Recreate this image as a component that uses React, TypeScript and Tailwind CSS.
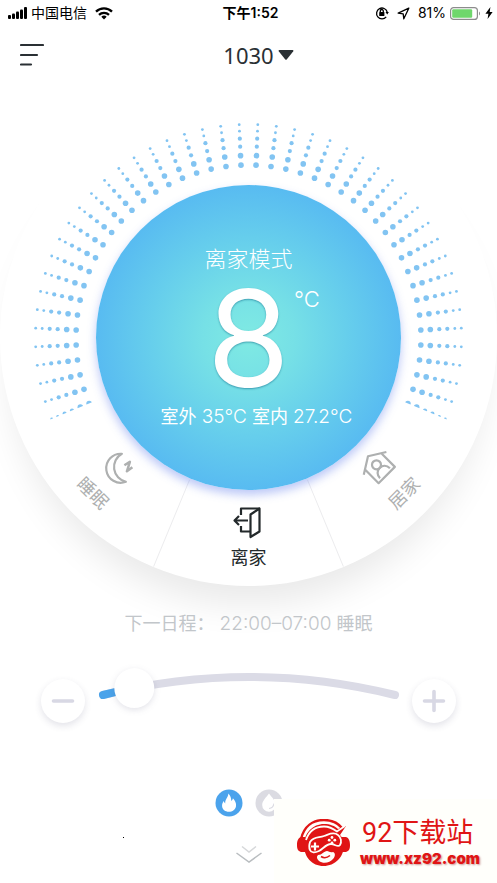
import { useState } from "react";
import type { ReactNode } from "react";

const CENTER = 248.5;
const DOTS = [
  { r: 213, size: 1.4 },
  { r: 206.5, size: 1.4 },
  { r: 199, size: 2.1 },
  { r: 191, size: 2.1 },
  { r: 182, size: 2.8 },
  { r: 172.5, size: 2.8 },
];
const RAYS = Array.from({ length: 46 }, (_, i) => -112.5 + i * 5);

function polar(r: number, deg: number) {
  const a = (deg * Math.PI) / 180;
  return { x: CENTER + r * Math.sin(a), y: CENTER - r * Math.cos(a) };
}

function StatusBar() {
  return (
    <div className="grid h-6 grid-cols-3 items-center pt-0.5 pr-1 pl-2 text-sm text-black">
      <div className="flex items-center gap-1">
        <svg width="19" height="12" viewBox="0 0 19 12" aria-hidden="true">
          <rect x="0" y="8" width="3" height="4" rx="1" />
          <rect x="4" y="6.5" width="3" height="5.5" rx="1" />
          <rect x="8" y="4.5" width="3" height="7.5" rx="1" />
          <rect x="12" y="2.5" width="3" height="9.5" rx="1" />
          <rect x="16" y="0" width="3" height="12" rx="1" />
        </svg>
        <span>中国电信</span>
        <svg className="ml-1" width="18" height="13" viewBox="0 0 18 13" fill="none" stroke="#000" strokeWidth="2.3" aria-hidden="true">
          <path d="M1 4.6a11.5 11.5 0 0 1 16 0" />
          <path d="M4 7.8a7.2 7.2 0 0 1 10 0" />
          <path d="M6.3 9.8a4 4 0 0 1 5.4 0L9 12.6z" fill="#000" stroke="none" />
        </svg>
      </div>
      <div className="text-center font-semibold">下午1:52</div>
      <div className="flex items-center justify-end gap-1">
        <svg className="mr-1" width="14" height="14" viewBox="0 0 14 14" fill="none" stroke="#000" strokeWidth="1.3" aria-hidden="true">
          <path d="M11.2 10.8A5.4 5.4 0 1 1 12.2 6" />
          <path d="M10.5 6h3.4l-1.7 2.4z" fill="#000" stroke="none" />
          <rect x="4.2" y="6" width="5.2" height="4" rx=".6" fill="#000" stroke="none" />
          <path d="M5.3 6V5a1.5 1.5 0 0 1 3 0v1" />
        </svg>
        <svg className="mr-1" width="13" height="13" viewBox="0 0 13 13" fill="none" stroke="#000" strokeWidth="1.3" strokeLinejoin="round" aria-hidden="true">
          <path d="M11.8 1.2 1.2 6.2l5 .6.6 5z" />
        </svg>
        <span>81%</span>
        <svg width="31" height="13" viewBox="0 0 31 13" aria-hidden="true">
          <rect x=".6" y=".6" width="26.8" height="11.8" rx="3" fill="none" stroke="#8c8c8c" strokeWidth="1.2" />
          <rect x="2.2" y="2.2" width="20" height="8.6" rx="1.2" fill="#6fd76c" />
          <path d="M29 4.5v4c1.3-.5 1.3-3.5 0-4z" fill="#8c8c8c" />
        </svg>
        <svg width="8" height="12" viewBox="0 0 8 12" aria-hidden="true">
          <path d="M5.4 0 .4 6.8h3L2.6 12l5-7H4.7z" />
        </svg>
      </div>
    </div>
  );
}

function Header() {
  return (
    <header className="grid h-16 grid-cols-3 items-center px-5 pb-0.5 text-[#2a3034]">
      <button type="button" aria-label="菜单" className="justify-self-start">
        <svg width="24" height="24" viewBox="0 0 24 24" stroke="currentColor" strokeWidth="2.2" strokeLinecap="round">
          <path d="M1 2h22M1 12h16M1 21.500h10" />
        </svg>
      </button>
      <button type="button" className="flex items-center gap-1 justify-self-center pl-5 font-['Noto_Sans',sans-serif] text-[22px] font-normal">
        1030
        <svg width="16" height="10" viewBox="0 0 15 10" fill="currentColor" aria-hidden="true">
          <path d="M.8 0h13.400a.8.8 0 0 1 .6 1.300L8.400 9.200a1.200 1.200 0 0 1-1.800 0L.2 1.300A.8.8 0 0 1 .8 0z" />
        </svg>
      </button>
    </header>
  );
}

function DialFace() {
  const a = polar(240, -112.5);
  const b = polar(240, 112.5);
  return (
    <svg viewBox="0 0 497 497" className="col-start-1 row-start-1 w-full" aria-hidden="true">
      <clipPath id="sweep">
        <path d={`M${CENTER} ${CENTER}L${a.x} ${a.y}L0 0H497L${b.x} ${b.y}z`} />
      </clipPath>
      <g fill="#82c4f2" clipPath="url(#sweep)">
        {RAYS.map((deg) =>
          DOTS.map((dot) => {
            const p = polar(dot.r, deg);
            return <circle key={`${deg}-${dot.r}`} cx={p.x} cy={p.y} r={dot.size} />;
          }),
        )}
      </g>
      {[157.5, 202.5].map((deg) => {
        const p = polar(154, deg);
        const q = polar(248, deg);
        return <line key={deg} x1={p.x} y1={p.y} x2={q.x} y2={q.y} stroke="#ececee" />;
      })}
    </svg>
  );
}

function Mode({ label, turn, tone, children }: { label: string; turn: string; tone: string; children: ReactNode }) {
  return (
    <div className={`pointer-events-none z-10 col-start-1 row-start-1 flex items-end justify-center pb-3.5 ${turn}`}>
      <button type="button" className={`pointer-events-auto flex flex-col items-center gap-1 text-lg font-normal ${tone}`}>
        <svg width="36" height="36" viewBox="-18 -18 36 36" fill="none" stroke="currentColor" strokeWidth="2.2" strokeLinejoin="round" aria-hidden="true">
          {children}
        </svg>
        {label}
      </button>
    </div>
  );
}

function Dial() {
  return (
    <main className="mx-auto mt-px grid aspect-square w-full max-w-lg rounded-full bg-white shadow-[0_30px_36px_-12px_rgba(0,0,0,0.09)]">
      <DialFace />
      <section className="z-10 col-start-1 row-start-1 flex aspect-square w-[305px] flex-col items-center place-self-center rounded-full bg-[radial-gradient(circle_closest-side,#7feae3_0%,#76e0e6_30%,#66ceec_65%,#58bbf1_100%)] pt-[58px] text-white shadow-[0_5px_10px_rgba(95,125,235,0.42)]">
        <h1 className="text-[22px] leading-8 font-light">离家模式</h1>
        <div className="grid grid-cols-[1fr_auto_1fr] items-start">
          <span className="col-start-2 text-[134px] leading-[126px] font-normal [text-shadow:0_1px_2px_rgba(20,110,140,0.6)]">8</span>
          <span className="pt-3 pl-1 text-[22px] leading-6 font-light">°C</span>
        </div>
        <p className="pl-4 text-lg leading-8">
          室外 <span className="text-[19px] font-light">35°C</span> 室内 <span className="text-[19px] font-light">27.2°C</span>
        </p>
      </section>
      <Mode label="睡眠" turn="rotate-45" tone="text-[#aeb0b0]">
        <g transform="rotate(-45)">
          <path d="M3.500-14.500A14.500 14.500 0 1 0 7.500 13.500 A15.100 15.100 0 0 1 3.500-14.500z" />
          <path d="M6-3 11.500-6.500 8.500 3 14-1" strokeWidth="2.500" />
        </g>
      </Mode>
      <Mode label="离家" turn="rotate-0" tone="text-[#23292b]">
        <path d="M-8-7v-6.500H10.500M-8 4v5.500H1" />
        <path d="M10.500-13.500V9.500L1.500 15V-7.500z" />
        <path d="M-1-1.500H-14M-10-6-14.500-1.500-10 3" />
      </Mode>
      <Mode label="居家" turn="-rotate-45" tone="text-[#aeb0b0]">
        <path d="M-16-6 0-16 16-6M-11.500-8V10.500H11.500V-8" />
        <circle cx="0" cy="-4" r="4.500" />
        <path d="M-7 8c0-4.500 3-7.500 7-7.500S7 3.500 7 8" />
      </Mode>
    </main>
  );
}

function StepButton({ label, path, onClick }: { label: string; path: string; onClick: () => void }) {
  return (
    <button
      type="button"
      aria-label={label}
      onClick={onClick}
      className="mt-4 flex size-11 shrink-0 items-center justify-center rounded-full bg-white shadow-[0_3px_7px_rgba(60,60,100,0.14)]"
    >
      <svg width="24" height="24" viewBox="0 0 24 24" stroke="#d8d8e4" strokeWidth="3.600" strokeLinecap="round">
        <path d={path} />
      </svg>
    </button>
  );
}

function TemperatureSlider() {
  const [value, setValue] = useState(8);
  const t = (value - 5) / 28;
  const x = 6 + 292 * t;
  const y = 32 - 72 * t * (1 - t);
  return (
    <div className="mx-auto flex w-full max-w-lg justify-between px-[41px]">
      <StepButton label="降低温度" path="M2.500 12h19" onClick={() => setValue(Math.max(5, value - 1))} />
      <div className="grid w-[304px] shrink-0">
        <svg viewBox="0 0 304 60" className="col-start-1 row-start-1 w-full overflow-visible" fill="none" strokeWidth="8" strokeLinecap="round" aria-hidden="true">
          <path d="M6 32Q152-4 298 32" stroke="#dbdbe6" />
          <path d="M6 32Q152-4 298 32" stroke="#4aa3ea" pathLength={100} strokeDasharray={`${t * 100 - 3} 200`} />
          <circle cx={x} cy={y} r="20" fill="#fff" className="drop-shadow-[0_2px_3px_rgba(60,60,100,0.14)]" />
        </svg>
        <input
          type="range"
          aria-label="目标温度"
          min={5}
          max={33}
          value={value}
          onChange={(e) => setValue(Number(e.target.value))}
          className="z-10 col-start-1 row-start-1 w-full cursor-pointer opacity-0"
        />
      </div>
      <StepButton label="升高温度" path="M2.500 12h19M12 2.500v19" onClick={() => setValue(Math.min(33, value + 1))} />
    </div>
  );
}

function Features() {
  return (
    <div className="flex flex-col items-center">
      <div className="flex gap-3">
        <button type="button" aria-label="加热" className="size-7 rounded-full">
          <svg viewBox="0 0 28 28">
            <circle cx="14" cy="14" r="13.500" fill="#4ba3ec" />
            <path d="M13.300 4.500c1.800 2 3.200 4.300 2.900 7.300 1-.5 1.600-1.400 1.700-2.600 2.100 2.400 3.600 4.900 3.100 8-.6 3.400-3.400 5.600-7.200 5.600-3.600 0-6.400-2.200-6.700-5.500-.2-2 .5-3.700 1.600-5.200.2 1 .7 1.800 1.500 2.300-.1-1.600.2-3.100 1.200-4.600 1-1.600 1.900-3.200 1.900-5.300z" fill="#fff" />
          </svg>
        </button>
        <button type="button" aria-label="加湿" className="size-7 rounded-full">
          <svg viewBox="0 0 28 28">
            <circle cx="14" cy="14" r="13.500" fill="#dbdbe2" />
            <path d="M14 4.500c3 4 6.800 7.400 6.800 11.600A6.700 6.700 0 0 1 14 22.800a6.700 6.700 0 0 1-6.800-6.700C7.200 11.900 11 8.500 14 4.500z" fill="#fff" />
            <path d="M14 19.500c3-.3 4.500-2 5-5" fill="none" stroke="#dbdbe2" strokeWidth="1.200" />
          </svg>
        </button>
      </div>
      <button type="button" aria-label="展开更多" className="mt-7">
        <svg width="26" height="19" viewBox="0 0 26 19" fill="none" strokeWidth="1.500">
          <path d="M6 1.500 13 7l7-5.500" stroke="#d6d8da" />
          <path d="M.5 8 13 17 25.500 8" stroke="#b9bdc0" />
        </svg>
      </button>
    </div>
  );
}

function SiteBadge() {
  return (
    <aside className="absolute right-0 bottom-0 flex h-[84px] w-[223px] items-center gap-2 bg-[#fffffb] pt-1 pl-[22px] text-[#e01515]">
      <svg className="shrink-0" width="56" height="48" viewBox="0 0 56 48" aria-hidden="true">
        <path d="M5 20C8 7 17 1 28 1c8 0 14 3 18 8" fill="none" stroke="currentColor" strokeWidth="2.400" />
        <path d="M5 18h4v15H5c-3-1-4-3-4-7s1-7 4-8zM50 18h-4v15h4c3-1 4-3 4-7s-1-7-4-8z" fill="currentColor" />
        <path d="M28 5c6 0 11 2 14 5l8-3-6 9c3 3 4 6 4 10 0 12-9 21-20.500 21S8 38 8 26 17 5 28 5z" fill="currentColor" />
        <path d="M10 21c3-9 10-13.500 18-13.500 5 0 9 2 13 5l8-5.500" fill="none" stroke="#fffffb" strokeWidth="1.800" />
        <path d="M14 23c4-6 9-4 14-6 4-1 9-5 14-1 3 2 4 7 2 10-2 3-5-1-9-1-5 0-8 5-12 7-4 2-8 2-9-1-1-2-1-5 0-8z" fill="currentColor" stroke="#fffffb" strokeWidth="1.800" />
        <path d="M19 23.500v8M15 27.500h8" stroke="#fffffb" strokeWidth="2.200" />
        <g fill="#fffffb">
          <circle cx="36" cy="18.500" r="1.400" />
          <circle cx="36" cy="24" r="1.400" />
          <circle cx="33.200" cy="21.200" r="1.400" />
          <circle cx="38.800" cy="21.200" r="1.400" />
          <path d="M22 36c4 0 6-4 9-4 2 0 3 2 6 1 3 1 2 5 0 7-3 4-10 5-14 2-2-2-3-4-1-6z" />
        </g>
        <path d="M25 37.500c3 2 6 1.500 9-1" fill="none" stroke="currentColor" strokeWidth="1.600" />
      </svg>
      <div className="flex flex-col">
        <strong className="pl-0.5 font-['Roboto','Noto_Sans_CJK_SC',sans-serif] text-[27px] leading-8 font-normal whitespace-nowrap">92下载站</strong>
        <a href="#site" className="font-['Inter',sans-serif] text-[15px] leading-5 font-black [text-shadow:1px_1px_2px_rgba(120,0,0,0.4)]">
          www.xz92.com
        </a>
      </div>
    </aside>
  );
}

export default function App() {
  return (
    <div className="relative min-h-screen overflow-x-clip bg-white font-['Inter','Noto_Sans_CJK_SC',sans-serif]">
      <StatusBar />
      <Header />
      <Dial />
      <p className="mt-6 text-center text-lg leading-7 text-[#c2c6ca]">
        下一日程： <span className="text-[19px] font-light">22:00–07:00</span> 睡眠
      </p>
      <div className="mt-[25px]">
        <TemperatureSlider />
      </div>
      <div className="mt-[66px]">
        <Features />
      </div>
      <span className="absolute bottom-[45px] left-[123px] size-px bg-black" />
      <SiteBadge />
    </div>
  );
}
